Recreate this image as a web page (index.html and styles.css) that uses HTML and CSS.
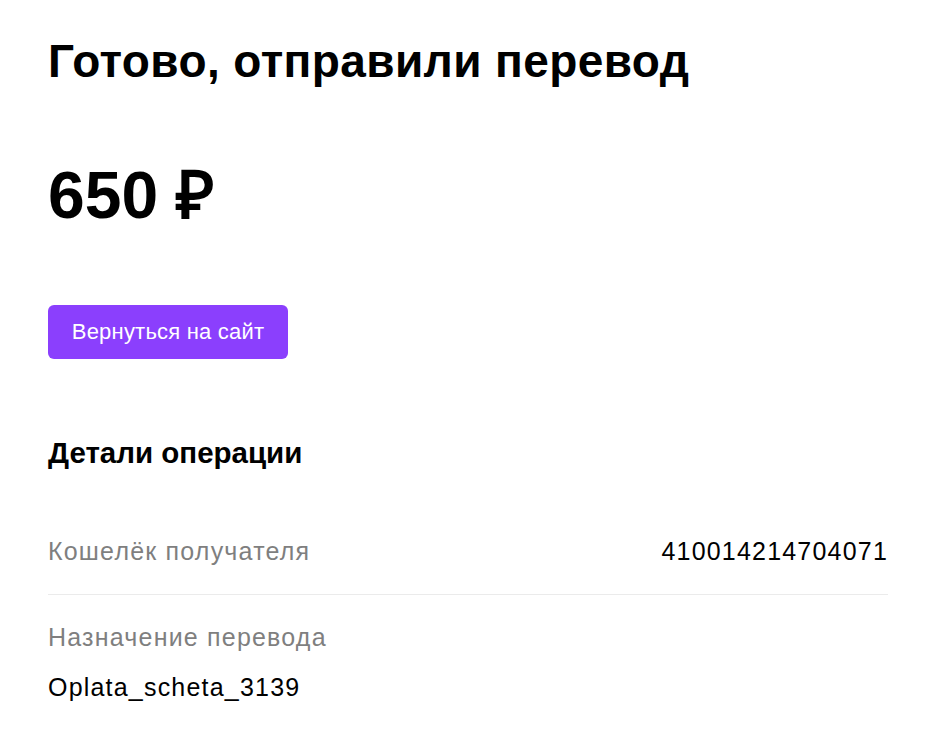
FILE: index.html
```html
<!DOCTYPE html>
<html lang="ru">
<head>
<meta charset="utf-8">
<title>Готово, отправили перевод</title>
<link rel="stylesheet" href="styles.css">
</head>
<body>
<main class="page">
  <h1 class="title">Готово, отправили перевод</h1>
  <div class="amount">650 ₽</div>
  <a class="btn" href="#">Вернуться на сайт</a>
  <h2 class="details-title">Детали операции</h2>
  <div class="row row-inline">
    <span class="label">Кошелёк получателя</span>
    <span class="value">410014214704071</span>
  </div>
  <div class="row row-stack">
    <span class="label">Назначение перевода</span>
    <span class="value">Oplata_scheta_3139</span>
  </div>
</main>
</body>
</html>
```
FILE: styles.css
```css
html, body {
  margin: 0;
  padding: 0;
  background: #fff;
}
body {
  font-family: "Liberation Sans", Arial, sans-serif;
  color: #000;
}
.page {
  padding: 33px 62px 0 48px;
  display: flex;
  flex-direction: column;
  align-items: flex-start;
}
.title {
  margin: 0;
  font-size: 46px;
  line-height: 56px;
  font-weight: 700;
  letter-spacing: 0.4px;
}
.amount {
  margin-top: 66px;
  font-size: 66px;
  line-height: 80px;
  font-weight: 700;
}
.btn {
  margin-top: 70px;
  box-sizing: border-box;
  width: 240px;
  height: 54px;
  display: flex;
  align-items: center;
  justify-content: center;
  background: #8b3ffd;
  color: #fff;
  border-radius: 6px;
  font-size: 22px;
  letter-spacing: 0.2px;
  text-decoration: none;
}
.details-title {
  margin: 77px 0 0;
  font-size: 29.5px;
  line-height: 34px;
  font-weight: 700;
}
.row {
  align-self: stretch;
  font-size: 25px;
  line-height: 30px;
  letter-spacing: 1.2px;
}
.row-inline {
  margin-top: 66px;
  display: flex;
  justify-content: space-between;
  padding-bottom: 28px;
  border-bottom: 1px solid #ebebeb;
}
.row-stack {
  padding-top: 27px;
  display: flex;
  flex-direction: column;
  gap: 20px;
}
.label {
  color: #7f7f7f;
}
.value {
  color: #000;
}
```
